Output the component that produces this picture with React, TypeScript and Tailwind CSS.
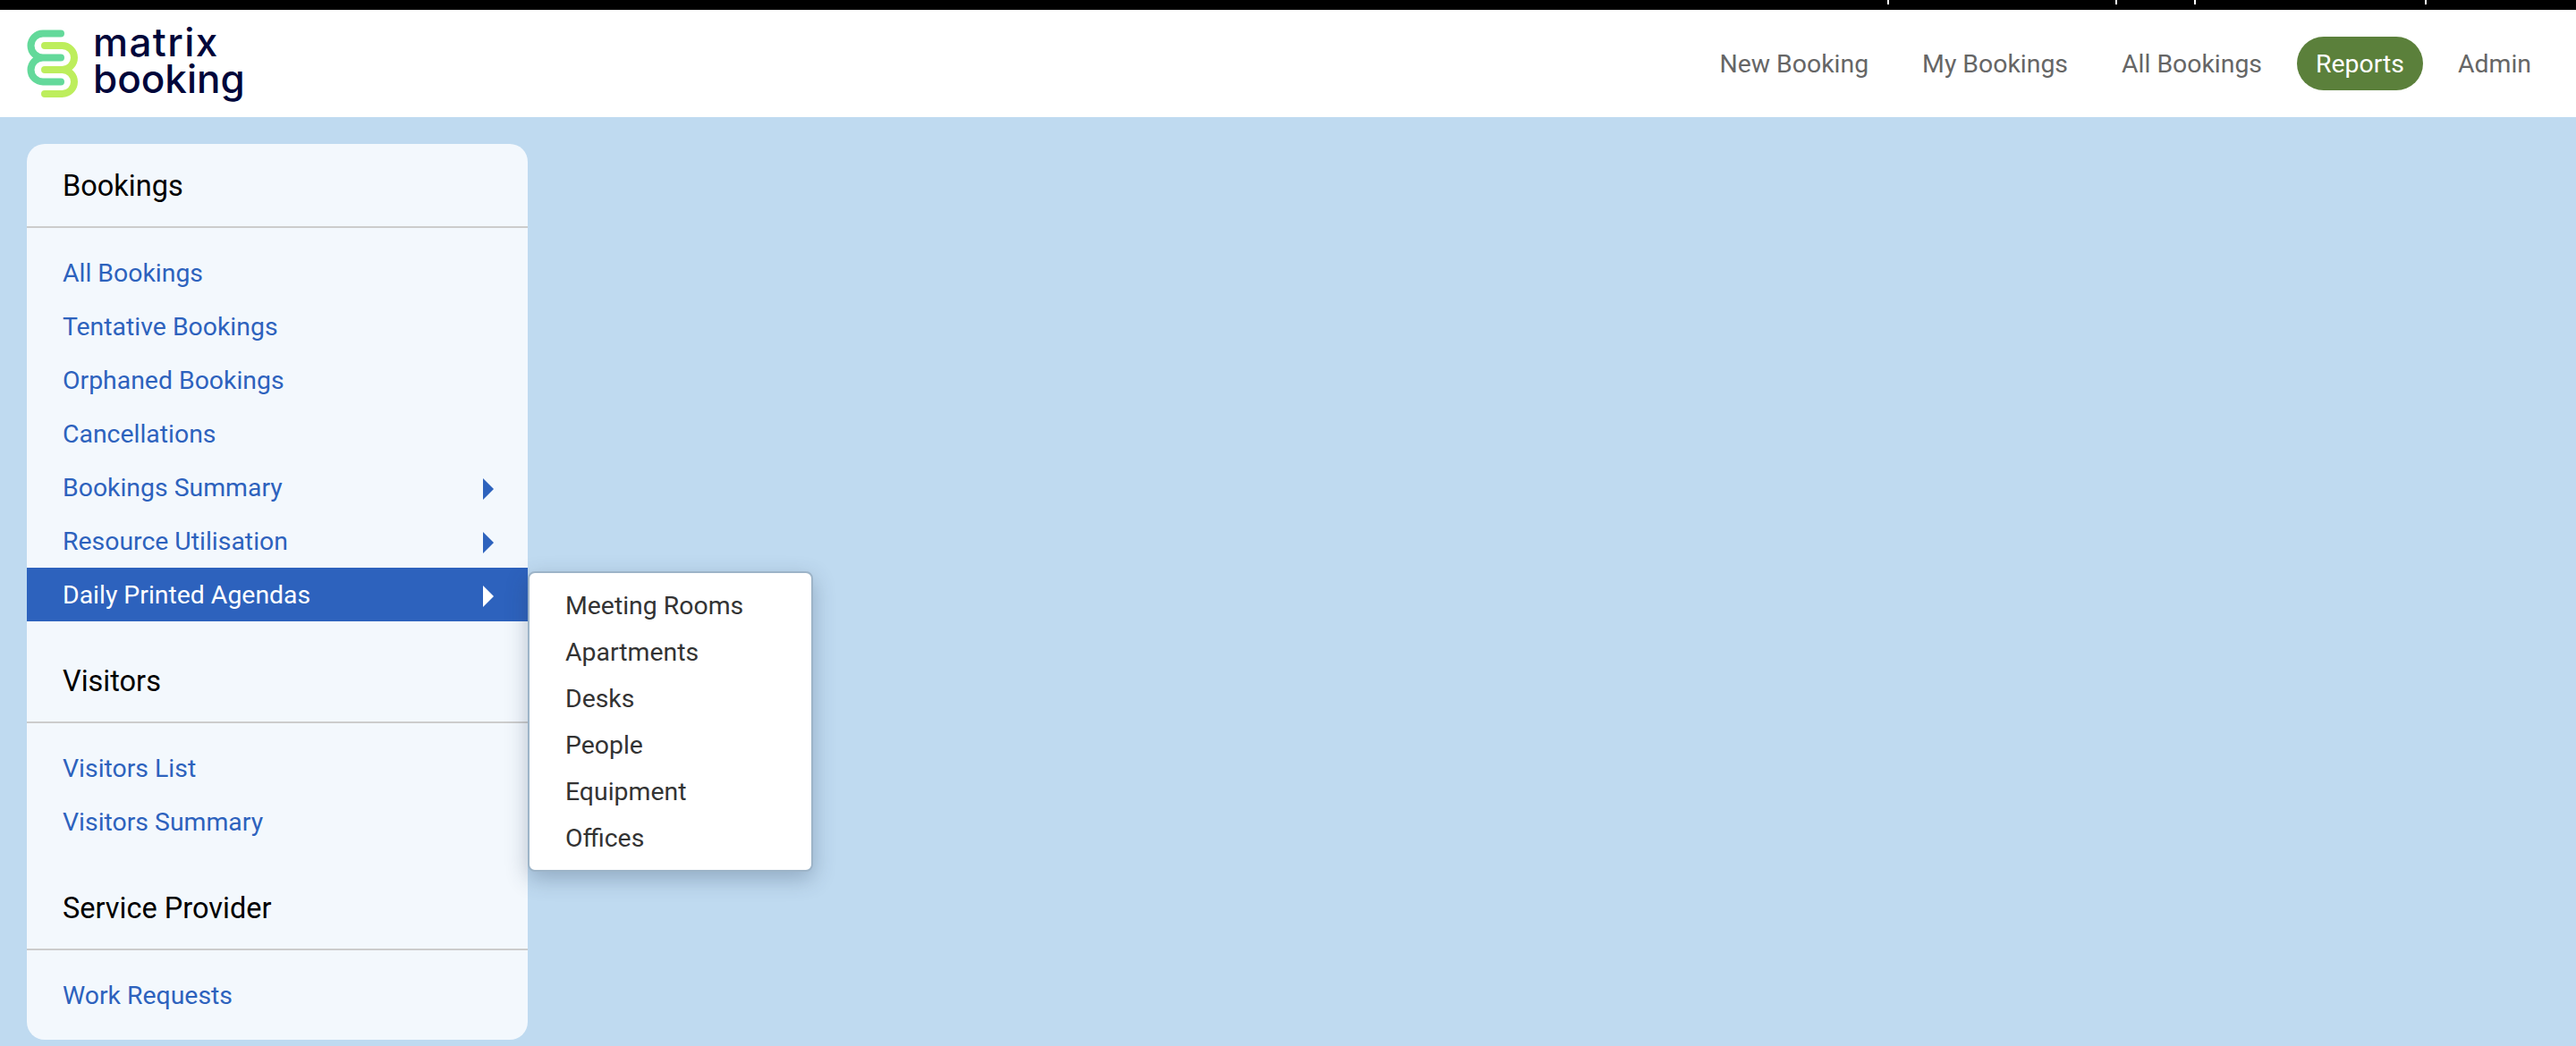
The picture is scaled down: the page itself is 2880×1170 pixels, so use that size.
const navItems = ['New Booking', 'My Bookings', 'All Bookings', 'Reports', 'Admin'];

const flyoutItems = ['Meeting Rooms', 'Apartments', 'Desks', 'People', 'Equipment', 'Offices'];

type Row = { label: string; arrow?: boolean; active?: boolean };

const sections: { title: string; rows: Row[] }[] = [
  {
    title: 'Bookings',
    rows: [
      { label: 'All Bookings' },
      { label: 'Tentative Bookings' },
      { label: 'Orphaned Bookings' },
      { label: 'Cancellations' },
      { label: 'Bookings Summary', arrow: true },
      { label: 'Resource Utilisation', arrow: true },
      { label: 'Daily Printed Agendas', arrow: true, active: true },
    ],
  },
  {
    title: 'Visitors',
    rows: [{ label: 'Visitors List' }, { label: 'Visitors Summary' }],
  },
  {
    title: 'Service Provider',
    rows: [{ label: 'Work Requests' }],
  },
];

function Logo() {
  return (
    <div className="flex items-center gap-[14px]">
      <svg width="60" height="76" viewBox="0 0 60 76" fill="none" strokeWidth="8" strokeLinecap="round">
        <path d="M38 4.5H18a13.5 13.5 0 0 0 0 27H38M18 31.5a13.5 13.5 0 0 0 0 27H38" stroke="#63d99a" />
        <path d="M20 18H39.500a13.500 13.500 0 0 1 0 27H20M39.500 45a13.500 13.500 0 0 1 0 27H20" stroke="#bdee5c" />
      </svg>
      <div className="pb-[7px] font-['Inter',sans-serif] text-[44px] leading-[41px] font-medium text-[#00063a]">
        <div className="tracking-[1.4px]">matrix</div>
        <div>booking</div>
      </div>
    </div>
  );
}

function Flyout() {
  return (
    <div className="absolute left-full top-[4px] z-10 w-[319px] rounded-[8px] border-2 border-[#9db4c8] bg-white py-[10px] pl-[40px] shadow-[0_8px_24px_rgba(40,60,90,0.3)]">
      {flyoutItems.map((item) => (
        <div key={item} className="flex h-[52px] items-center pt-[3px] text-[28.4px] text-[#333333]">
          {item}
        </div>
      ))}
    </div>
  );
}

function MenuRow({ row }: { row: Row }) {
  return (
    <div
      className={`relative flex h-[60px] items-center justify-between pl-[40px] pr-[38px] pt-[3px] text-[28.4px] ${
        row.active ? 'bg-[#2d62bd] text-white' : 'text-[#2d62bd]'
      }`}
    >
      <span>{row.label}</span>
      {row.arrow && (
        <svg width="12" height="24" viewBox="0 0 12 24" className={row.active ? 'fill-white' : 'fill-[#2d62bd]'}>
          <path d="M0 0L12 12L0 24Z" />
        </svg>
      )}
      {row.active && <Flyout />}
    </div>
  );
}

export default function App() {
  return (
    <div className="flex h-[1170px] flex-col overflow-hidden bg-[#bfdaf0] font-['Roboto',sans-serif]">
      {/* Top strip */}
      <div className="flex h-[11px] shrink-0 items-start bg-black pl-[2110px]">
        <div className="h-[5px] w-[2px] bg-white" />
        <div className="ml-[253px] h-[5px] w-[2px] bg-white" />
        <div className="ml-[86px] h-[5px] w-[2px] bg-white" />
        <div className="ml-[256px] h-[5px] w-[2px] bg-white" />
      </div>

      {/* Header */}
      <header className="flex h-[120px] shrink-0 items-center justify-between bg-white pl-[30px] pr-[29px]">
        <Logo />
        <nav className="flex items-center gap-[18px]">
          {navItems.map((item) => (
            <div
              key={item}
              className={`flex h-[60px] items-center rounded-full px-[21px] pt-[2px] text-[28.4px] ${
                item === 'Reports' ? 'bg-[#5b803b] text-white' : 'text-[#666666]'
              }`}
            >
              {item}
            </div>
          ))}
        </nav>
      </header>

      {/* Sidebar */}
      <main className="pl-[30px] pt-[30px]">
        <div className="w-[560px] rounded-[20px] bg-[#f3f8fd]">
          {sections.map((section) => (
            <section key={section.title}>
              <h2 className="flex h-[94px] items-center border-b-2 border-[#cccccc] pl-[40px] pt-[2px] text-[32.5px] text-black">
                {section.title}
              </h2>
              <div className="py-[20px]">
                {section.rows.map((row) => (
                  <MenuRow key={row.label} row={row} />
                ))}
              </div>
            </section>
          ))}
        </div>
      </main>
    </div>
  );
}
